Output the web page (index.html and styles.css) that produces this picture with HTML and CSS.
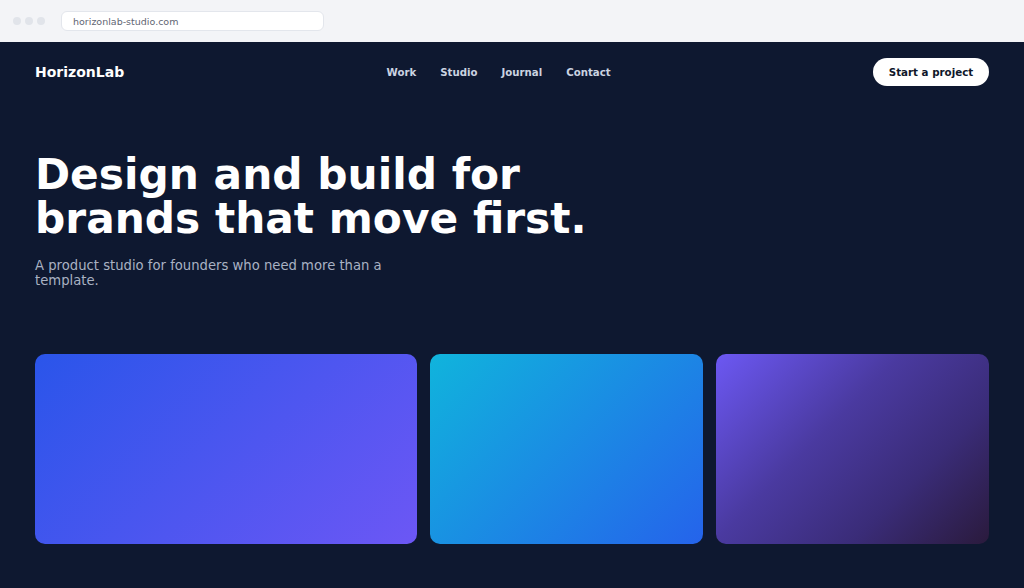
FILE: index.html
```html
<!DOCTYPE html>
<html lang="en">
<head>
<meta charset="utf-8">
<title>HorizonLab</title>
<link rel="stylesheet" href="styles.css">
</head>
<body>
<div class="chrome">
  <div class="dots"><span></span><span></span><span></span></div>
  <div class="url">horizonlab-studio.com</div>
</div>
<div class="page">
  <header class="nav">
    <div class="logo">HorizonLab</div>
    <nav class="links">
      <a>Work</a><a>Studio</a><a>Journal</a><a>Contact</a>
    </nav>
    <a class="cta">Start a project</a>
  </header>
  <section class="hero">
    <h1>Design and build for<br>brands that move first.</h1>
    <p>A product studio for founders who need more than a template.</p>
  </section>
  <section class="cards">
    <div class="card c1"></div>
    <div class="card c2"></div>
    <div class="card c3"></div>
  </section>
</div>
</body>
</html>
```
FILE: styles.css
```css
* { box-sizing: border-box; }
html, body { margin: 0; padding: 0; }
body {
  width: 1024px;
  height: 588px;
  overflow: hidden;
  font-family: "DejaVu Sans", "Liberation Sans", sans-serif;
  background: #0f172e;
}
.chrome {
  height: 42px;
  background: #f3f4f7;
  display: flex;
  align-items: center;
  padding: 0 0 0 13px;
  gap: 16px;
}
.dots { display: flex; gap: 4px; }
.dots span {
  width: 8px; height: 8px; border-radius: 50%;
  background: #e1e4ea;
}
.url {
  width: 263px;
  height: 20px;
  background: #fff;
  border: 1px solid #e3e6ec;
  border-radius: 6px;
  font-size: 9.5px;
  color: #5f6673;
  display: flex;
  align-items: center;
  padding-left: 11px;
}
.page {
  height: 546px;
  background: #0e1830;
  padding: 0 35px;
}
.nav {
  height: 60px;
  display: flex;
  align-items: center;
  justify-content: space-between;
}
.logo {
  color: #fff;
  font-weight: bold;
  font-size: 14px;
}
.links {
  display: flex;
  gap: 24px;
}
.links a {
  color: #cbd3e1;
  font-size: 10.2px;
  font-weight: bold;
}
.cta {
  width: 116px;
  height: 28px;
  background: #fff;
  border-radius: 14px;
  color: #0f172a;
  font-weight: bold;
  font-size: 10.3px;
  display: flex;
  align-items: center;
  justify-content: center;
}
.hero { padding-top: 51px; }
.hero h1 {
  margin: 0;
  color: #fff;
  font-size: 42.3px;
  line-height: 44px;
  font-weight: bold;
}
.hero p {
  margin: 17px 0 0;
  max-width: 380px;
  color: #a9b2c3;
  font-size: 13.2px;
  line-height: 15px;
}
.cards {
  margin-top: 66px;
  display: grid;
  grid-template-columns: 1.4fr 1fr 1fr;
  gap: 13px;
}
.card { height: 190px; border-radius: 10px; }
.c1 { background: linear-gradient(135deg, #2a55ea, #6c57f5); }
.c2 { background: linear-gradient(135deg, #10b4dc, #2563eb); }
.c3 { background: linear-gradient(135deg, #6c58f3 0%, #4a3aa0 40%, #3a2c78 70%, #2a1a3c 100%); }
```
